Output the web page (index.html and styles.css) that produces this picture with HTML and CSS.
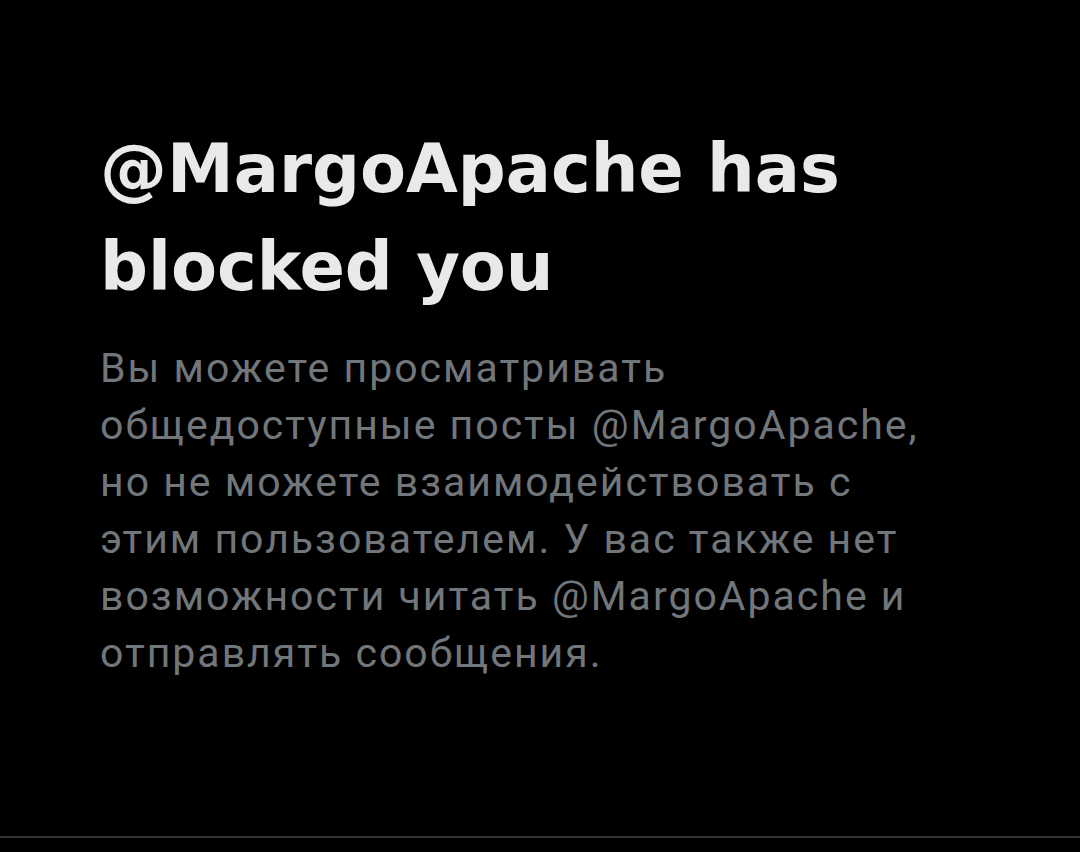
FILE: index.html
```html
<!DOCTYPE html>
<html lang="ru">
<head>
    <meta charset="UTF-8">
    <title>@MargoApache has blocked you</title>
    <link rel="stylesheet" href="styles.css">
</head>
<body>
<div class="blocked">
    <div class="blocked-box">
        <h1 class="blocked-title">@MargoApache has<br>blocked you</h1>
        <p class="blocked-text">Вы можете просматривать<br>общедоступные посты @MargoApache,<br>но не можете взаимодействовать с<br>этим пользователем. У вас также нет<br>возможности читать @MargoApache и<br>отправлять сообщения.</p>
    </div>
</div>
</body>
</html>
```

FILE: styles.css
```css
html, body {
    margin: 0;
    padding: 0;
    background: #000;
}

.blocked {
    height: 836px;
    border-bottom: 2px solid #2f3336;
    box-sizing: content-box;
}

.blocked-box {
    padding: 120px 0 0 100px;
}

.blocked-title {
    margin: 0;
    font-family: "DejaVu Sans", "Liberation Sans", sans-serif;
    font-weight: 700;
    font-size: 67px;
    line-height: 98px;
    color: #e7e9ea;
}

.blocked-text {
    margin: 24px 0 0;
    font-family: Roboto, "Open Sans", sans-serif;
    font-size: 41px;
    line-height: 57px;
    letter-spacing: 2px;
    color: #71767b;
}
```
